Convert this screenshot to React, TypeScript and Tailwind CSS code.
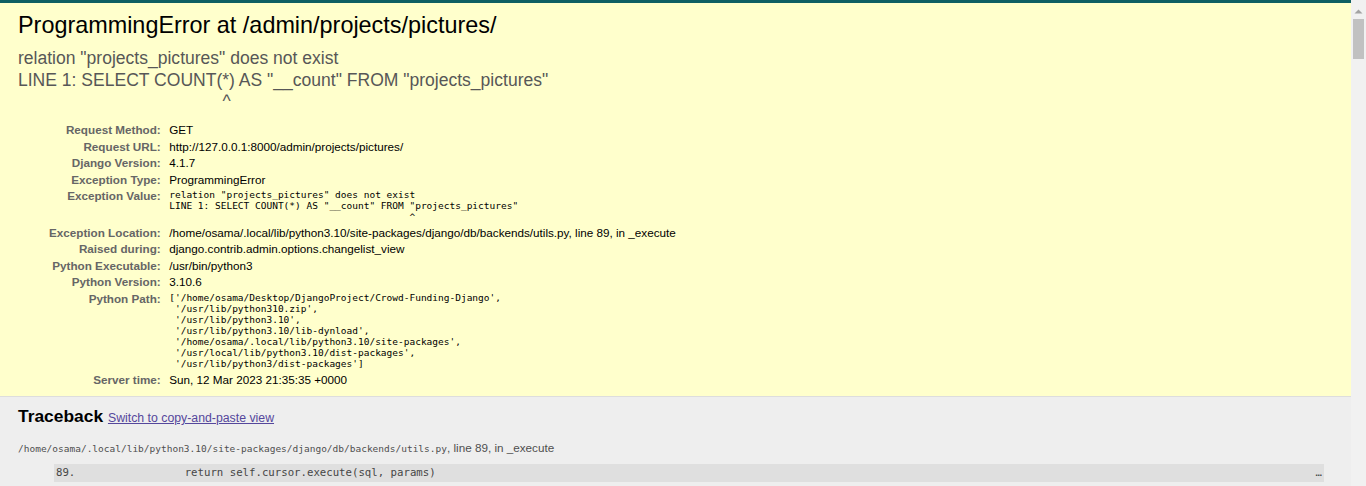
import React from 'react'

const sans = "font-['Liberation_Sans',Arial,sans-serif]"
const mono = "font-['DejaVu_Sans_Mono',monospace]"

const caretPad = ' '.repeat(42)

const exceptionValue = `relation "projects_pictures" does not exist
LINE 1: SELECT COUNT(*) AS "__count" FROM "projects_pictures"
${caretPad}^`

const pythonPath = `['/home/osama/Desktop/DjangoProject/Crowd-Funding-Django',
 '/usr/lib/python310.zip',
 '/usr/lib/python3.10',
 '/usr/lib/python3.10/lib-dynload',
 '/home/osama/.local/lib/python3.10/site-packages',
 '/usr/local/lib/python3.10/dist-packages',
 '/usr/lib/python3/dist-packages']`

const meta: { label: string; value: string; pre?: boolean }[] = [
  { label: 'Request Method:', value: 'GET' },
  { label: 'Request URL:', value: 'http://127.0.0.1:8000/admin/projects/pictures/' },
  { label: 'Django Version:', value: '4.1.7' },
  { label: 'Exception Type:', value: 'ProgrammingError' },
  { label: 'Exception Value:', value: exceptionValue, pre: true },
  {
    label: 'Exception Location:',
    value: '/home/osama/.local/lib/python3.10/site-packages/django/db/backends/utils.py, line 89, in _execute',
  },
  { label: 'Raised during:', value: 'django.contrib.admin.options.changelist_view' },
  { label: 'Python Executable:', value: '/usr/bin/python3' },
  { label: 'Python Version:', value: '3.10.6' },
  { label: 'Python Path:', value: pythonPath, pre: true },
  { label: 'Server time:', value: 'Sun, 12 Mar 2023 21:35:35 +0000' },
]

function Scrollbar() {
  return (
    <div className="w-[15px] shrink-0 bg-[#f1f1f1] flex flex-col items-center">
      <svg width="15" height="17" viewBox="0 0 15 17" className="shrink-0">
        <path d="M3.5 13.5 L7.5 9.5 L11.5 13.5 Z" fill="#a3a3a3" />
      </svg>
      <div className="mt-[2px] w-[11px] h-[40px] bg-[#c1c1c1]" />
    </div>
  )
}

export default function App() {
  return (
    <div className={`flex h-[486px] overflow-hidden bg-[#eee] ${sans}`}>
      <div className="flex-1 min-w-0">
        {/* top strip */}
        <div className="h-[3px] bg-[#0f5f63]" />

        {/* Summary */}
        <div className="bg-[#ffc] px-[18px] pt-[9px] pb-[9px] border-b border-[#ddd]">
          <h1 className="text-[23.4px] leading-[27px] text-black">
            ProgrammingError at /admin/projects/pictures/
          </h1>
          <pre className={`my-[9px] text-[17.55px] leading-[21.5px] text-[#575757] whitespace-pre-wrap ${sans}`}>
            {exceptionValue}
          </pre>

          <div className="flex flex-col text-[11.7px] leading-[13px]">
            {meta.map((row) => (
              <div key={row.label} className="flex items-start py-[1.75px]">
                <div className="w-[148.55px] shrink-0 pr-[5.85px] text-right font-bold text-[#666]">
                  {row.label}
                </div>
                <div className="pl-[2.7px] min-w-0 text-black">
                  {row.pre ? (
                    <pre className={`text-[9.5px] leading-[11.05px] whitespace-pre ${mono}`}>
                      {row.value}
                    </pre>
                  ) : (
                    row.value
                  )}
                </div>
              </div>
            ))}
          </div>
        </div>

        {/* Traceback */}
        <div className="bg-[#eee] px-[18px] pt-[9px]">
          <h2 className="text-[17.4px] leading-[20px] font-bold text-black mb-[13px]">
            Traceback{' '}
            <span className="text-[12.3px] font-normal">
              <a href="#" className="text-[#55479c] underline">
                Switch to copy-and-paste view
              </a>
            </span>
          </h2>

          <ul className="text-[#4f4f4f]">
            <li>
              <div className="text-[11.7px] leading-[13px]">
                <code className={`text-[9.5px] ${mono}`}>
                  /home/osama/.local/lib/python3.10/site-packages/django/db/backends/utils.py
                </code>
                , line 89, in _execute
              </div>
              <div className="py-[9px]">
                <ol className="mx-[9px] pl-[27px]">
                  <li
                    className={`flex justify-between bg-[#dfdfdf] text-[#464646] px-[2px] py-[2.7px] text-[10.7px] leading-[12.5px] ${mono}`}
                  >
                    <pre className={`whitespace-pre ${mono}`}>
                      {'89.                 return self.cursor.execute(sql, params)'}
                    </pre>
                    <span>…</span>
                  </li>
                </ol>
              </div>
            </li>
          </ul>
        </div>
      </div>
      <Scrollbar />
    </div>
  )
}
